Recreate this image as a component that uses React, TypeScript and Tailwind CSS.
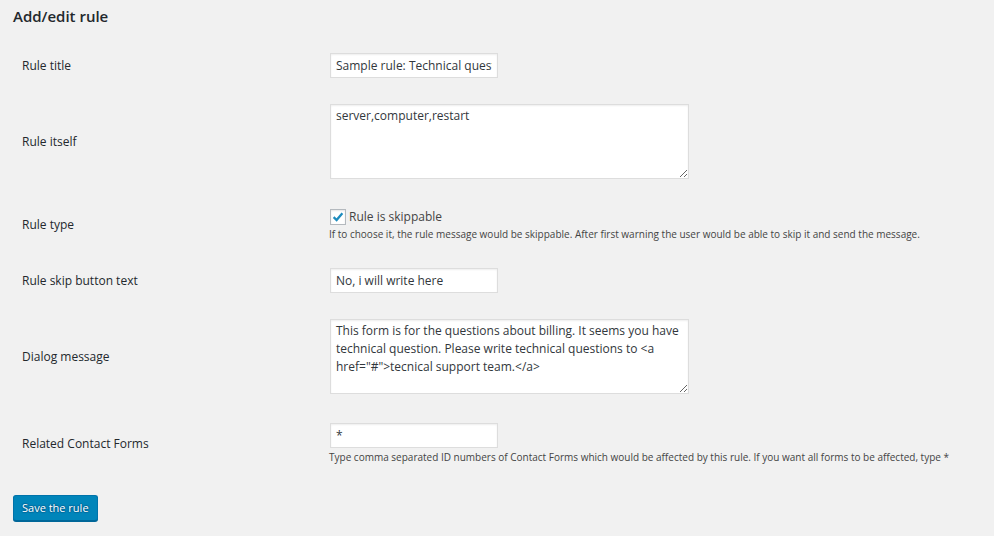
import type { ReactNode } from "react";

const font = { fontFamily: '"Open Sans", "Noto Sans", sans-serif' };

const Row = ({ label, children, className = "" }: { label: string; children: ReactNode; className?: string }) => (
    <div className={`flex items-center ${className}`}>
        <div className="w-[330px] shrink-0 pl-[22px] text-[12px] leading-[16px] text-[#23282d]">{label}</div>
        <div className="flex-1">{children}</div>
    </div>
);

const inputCls =
    "block h-[25px] w-[168px] border border-[#ddd] bg-white px-[5px] text-[12px] text-[#32373c] shadow-[inset_0_1px_2px_rgba(0,0,0,0.07)] outline-none";

const areaCls =
    "block h-[75px] w-[359px] border border-[#ddd] bg-white px-[5px] py-[2px] text-[12px] leading-[18px] text-[#32373c] shadow-[inset_0_1px_2px_rgba(0,0,0,0.07)] outline-none";

export default function App() {
    return (
        <div className="min-h-[536px] w-full bg-[#f1f1f1] px-[13px] pt-[4px]" style={font}>
            <h2 className="text-[15px] font-semibold leading-[24px] text-[#23282d]">Add/edit rule</h2>

            <div className="-ml-[13px]">
                <Row label="Rule title" className="mt-[25px]">
                    <input className={inputCls} defaultValue="Sample rule: Technical question" />
                </Row>

                <Row label="Rule itself" className="mt-[26px]">
                    <textarea className={areaCls} defaultValue="server,computer,restart" />
                </Row>

                <Row label="Rule type" className="mt-[30px]">
                    <div className="-ml-px">
                        <label className="flex h-[16px] items-center gap-[3px] text-[12px] leading-[16px] text-[#444]">
                            <span className="ml-px flex h-[16px] w-[16px] items-center justify-center border border-[#b4b9be] bg-white shadow-[inset_0_1px_2px_rgba(0,0,0,0.1)]">
                                <svg viewBox="0 0 16 16" className="h-[14px] w-[14px]">
                                    <path d="M3 8.2 L6.4 11.5 L13 3.8" fill="none" stroke="#1e8cbe" strokeWidth="2.6" />
                                </svg>
                            </span>
                            Rule is skippable
                        </label>
                        <p className="mt-[2px] text-[10px] leading-[14px] text-[#444]">
                            If to choose it, the rule message would be skippable. After first warning the user would be able to skip it and send the message.
                        </p>
                    </div>
                </Row>

                <Row label="Rule skip button text" className="mt-[27px]">
                    <input className={inputCls} defaultValue="No, i will write here" />
                </Row>

                <Row label="Dialog message" className="mt-[26px]">
                    <textarea
                        className={areaCls}
                        defaultValue={'This form is for the questions about billing. It seems you have technical question. Please write technical questions to <a href="#">tecnical support team.</a>'}
                    />
                </Row>

                <Row label="Related Contact Forms" className="mt-[29px]">
                    <div>
                        <input className={inputCls} defaultValue="*" />
                        <p className="mt-[2px] -ml-px text-[10px] leading-[14px] text-[#444]">
                            Type comma separated ID numbers of Contact Forms which would be affected by this rule. If you want all forms to be affected, type *
                        </p>
                    </div>
                </Row>
            </div>

            <button className="mt-[31px] h-[26px] rounded-[3px] border border-[#0073aa] border-b-[#006799] bg-[#0085ba] px-[8px] text-[11px] leading-[24px] text-white shadow-[0_1px_0_#006799] [text-shadow:0_-1px_1px_#006799,1px_0_1px_#006799,0_1px_1px_#006799,-1px_0_1px_#006799]">
                Save the rule
            </button>
        </div>
    );
}
